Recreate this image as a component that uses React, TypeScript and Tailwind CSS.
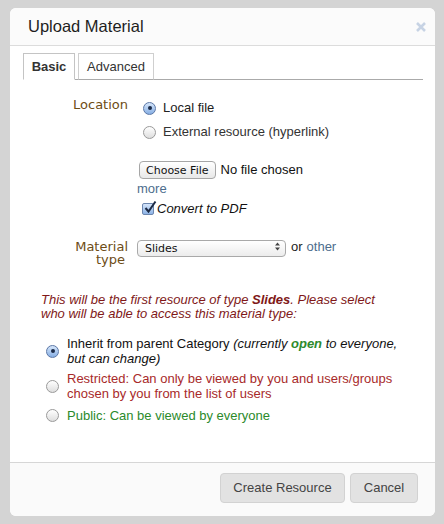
import { useState } from 'react';

type Access = 'inherit' | 'restricted' | 'public';

function Radio({ checked, onClick }: { checked: boolean; onClick?: () => void }) {
  return (
    <span
      onClick={onClick}
      className={`flex h-[13px] w-[13px] shrink-0 items-center justify-center rounded-full border ${
        checked
          ? 'border-[#5b77a6] bg-gradient-to-b from-[#d6e6fa] to-[#86aee3]'
          : 'border-[#9a9a9a] bg-gradient-to-b from-[#ffffff] to-[#dedede]'
      }`}
    >
      {checked && <span className="h-[4px] w-[4px] rounded-full bg-[#1b2b48]" />}
    </span>
  );
}

function Checkbox({ checked }: { checked: boolean }) {
  return (
    <span className="relative block h-[12px] w-[12px] shrink-0 rounded-[2px] border border-[#6c86ae] bg-gradient-to-b from-[#d5e5fa] to-[#8db3e6]">
      {checked && (
        <svg className="absolute -top-[4px] left-[0px]" width="14" height="14" viewBox="0 0 14 14">
          <path d="M2.5 8 L5.5 11.5 L12.5 1.5" fill="none" stroke="#1c2a44" strokeWidth="2" />
        </svg>
      )}
    </span>
  );
}

export default function App() {
  const [location, setLocation] = useState<'local' | 'external'>('local');
  const [access, setAccess] = useState<Access>('inherit');

  return (
    <div className="min-h-screen bg-[#d4d4d4] px-[10px] pt-[8px] font-['Liberation_Sans',Arial,sans-serif] text-[13px] text-[#222]">
      <div className="flex h-[508px] w-[425px] flex-col overflow-hidden rounded-[6px] bg-white">
        {/* header */}
        <div className="flex h-[38px] shrink-0 items-center justify-between border-b border-[#dcdcdc] bg-[#fbfbfb] pl-[18px] pr-[9px]">
          <h3 className="text-[16.5px] leading-none text-[#1e1e1e]">Upload Material</h3>
          <svg width="10" height="10" viewBox="0 0 10 10">
            <path d="M1 1 L9 9 M9 1 L1 9" stroke="#c7d3e4" strokeWidth="2.6" />
          </svg>
        </div>

        {/* body */}
        <div className="flex-1 px-[13px] pt-[7px]">
          <div className="flex w-[400px] border-b border-[#aaaaaa]">
            <div className="-mb-px flex h-[27px] w-[52px] items-center justify-center border border-b-white border-[#c4c4c4] bg-white pt-px font-bold text-[#333]">
              Basic
            </div>
            <div className="-mb-px ml-[3px] flex h-[27px] w-[76px] items-center justify-center border border-[#cfcfcf] border-b-[#aaaaaa] bg-white pt-px text-[#333]">
              Advanced
            </div>
          </div>

          {/* location */}
          <div className="mt-[16px] flex">
            <div className="w-[105px] pt-[1px] text-right font-['DejaVu_Sans',sans-serif] leading-[16px] text-[#6d4c15]">
              Location
            </div>
            <div className="ml-[9px]">
              <div className="flex h-[24px] items-center" onClick={() => setLocation('local')}>
                <span className="ml-[6px]">
                  <Radio checked={location === 'local'} />
                </span>
                <span className="ml-[7px]">Local file</span>
              </div>
              <div className="flex h-[24px] items-center" onClick={() => setLocation('external')}>
                <span className="ml-[6px]">
                  <Radio checked={location === 'external'} />
                </span>
                <span className="ml-[7px] text-[#333]">External resource (hyperlink)</span>
              </div>

              <div className="mt-[17px] flex h-[18px] items-center">
                <button className="ml-[2px] h-[18px] rounded-[4px] border border-[#a6a6a6] bg-gradient-to-b from-[#ffffff] to-[#e8e8e8] px-[6px] font-['DejaVu_Sans',sans-serif] text-[11px] leading-none text-[#111]">
                  Choose File
                </button>
                <span className="ml-[5px] text-[#111]">No file chosen</span>
              </div>
              <div className="mt-[2px] leading-[16px] text-[#4d6d8d]">more</div>
              <div className="mt-[3px] flex h-[18px] items-center">
                <span className="ml-[5px]">
                  <Checkbox checked />
                </span>
                <span className="ml-[3px] italic text-[#111]">Convert to PDF</span>
              </div>
            </div>
          </div>

          {/* material type */}
          <div className="mt-[20px] flex">
            <div className="flex w-[105px] flex-col items-end pt-[2px] font-['DejaVu_Sans',sans-serif] leading-[13px] text-[#6d4c15]">
              <span>Material</span>
              <span className="mr-[3px]">type</span>
            </div>
            <div className="ml-[9px] flex h-[17px] items-center">
              <div className="relative h-[17px] w-[149px]">
                <select className="h-full w-full appearance-none rounded-[4px] border border-[#a9a9a9] bg-gradient-to-b from-[#ffffff] to-[#ececec] pl-[7px] font-['DejaVu_Sans',sans-serif] text-[11px] leading-none text-[#111]">
                  <option>Slides</option>
                </select>
                <svg className="pointer-events-none absolute right-[6px] top-[4px]" width="5" height="9" viewBox="0 0 5 9">
                  <path d="M0 3.5 L2.5 0.5 L5 3.5 Z M0 5.5 L2.5 8.5 L5 5.5 Z" fill="#444" />
                </svg>
              </div>
              <span className="ml-[5px] text-[#222]">or</span>
              <span className="ml-[4px] text-[#4d6d8d]">other</span>
            </div>
          </div>

          {/* access notice */}
          <p className="ml-[18px] mt-[27px] w-[355px] italic leading-[14px] text-[#801818]">
            This will be the first resource of type <b>Slides</b>. Please select who will be able to access this
            material type:
          </p>

          <div className="ml-[23px] mt-[15px]">
            <div className="flex items-center" onClick={() => setAccess('inherit')}>
              <Radio checked={access === 'inherit'} />
              <span className="ml-[8px] w-[335px] leading-[15px] text-[#111]">
                Inherit from parent Category{' '}
                <i>
                  (currently <b className="text-[#2d8a2d]">open</b> to everyone, but can change)
                </i>
              </span>
            </div>
            <div className="mt-[5px] flex items-center" onClick={() => setAccess('restricted')}>
              <Radio checked={access === 'restricted'} />
              <span className="ml-[8px] w-[335px] leading-[15px] text-[#a82a2a]">
                Restricted: Can only be viewed by you and users/groups chosen by you from the list of users
              </span>
            </div>
            <div className="mt-[7px] flex items-center" onClick={() => setAccess('public')}>
              <Radio checked={access === 'public'} />
              <span className="ml-[8px] w-[335px] leading-[15px] text-[#2b8a2b]">
                Public: Can be viewed by everyone
              </span>
            </div>
          </div>
        </div>

        {/* footer */}
        <div className="flex h-[54px] shrink-0 justify-end gap-[5px] border-t border-[#d6d6d6] bg-[#fafafa] pr-[17px] pt-[10px]">
          <button className="h-[30px] w-[125px] rounded-[4px] border border-[#d2d2d2] bg-[#e2e2e2] text-[13px] text-[#444]">
            Create Resource
          </button>
          <button className="h-[30px] w-[68px] rounded-[4px] border border-[#d2d2d2] bg-[#e2e2e2] text-[13px] text-[#444]">
            Cancel
          </button>
        </div>
      </div>
    </div>
  );
}
